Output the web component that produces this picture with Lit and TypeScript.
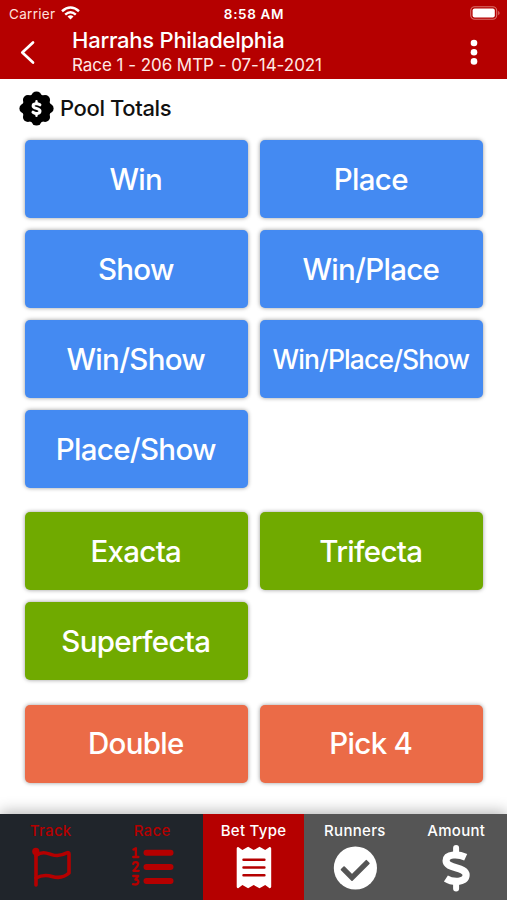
import { LitElement, html, css, svg } from "lit";
import { customElement } from "lit/decorators.js";
import { classMap } from "lit/directives/class-map.js";

type Bet = { label: string; cls?: string };
const groups: { color: string; bets: Bet[] }[] = [
  {
    color: "blue",
    bets: [
      { label: "Win" }, { label: "Place" }, { label: "Show" }, { label: "Win/Place" },
      { label: "Win/Show" }, { label: "Win/Place/Show", cls: "long" }, { label: "Place/Show" },
    ],
  },
  { color: "green", bets: [{ label: "Exacta" }, { label: "Trifecta" }, { label: "Superfecta" }] },
  { color: "orange", bets: [{ label: "Double" }, { label: "Pick 4" }] },
];

const flag = svg`<g fill="none" stroke="#b50000" stroke-width="3.6" stroke-linejoin="round" stroke-linecap="round">
  <path d="M7 5V38"/><path d="M7 8.5C13.5 4 17.5 6 22.5 7.6S33.5 8.4 38 5.8Q40 5 40 7V26C34 31.5 28.5 31 23 29.4S12.5 28 7 31"/></g>
  <circle cx="6.8" cy="4.4" r="3.6" fill="#b50000"/>`;
const list = svg`<g stroke="#b50000" stroke-width="6" stroke-linecap="round"><path d="M16.5 5.7H40.5M16.5 19.9H40.5M16.5 34H40.5"/></g>
  <g transform="translate(1.6 0)" fill="none" stroke="#b50000" stroke-width="2.3" stroke-linejoin="round" stroke-linecap="round">
  <path d="M1.8 2.5L4.3 1.2V10M1.6 10H6.8"/>
  <path d="M1.6 16.8C2.3 14.5 7 14.7 6.5 17.6Q6.2 19.3 1.8 23.8H7.2"/>
  <path d="M1.6 29H6.6L3.8 32.5C8.7 32.4 7.5 38.7 1.4 37.2"/></g>`;
const receipt = svg`<g transform="translate(1.2 0)"><path fill="#fff" d="M4.5 1.4Q4.5-.3 6-.1L10.2 3.1 15.9-.2 21.5 3.1 27.3-.2 33 3.1 37.4-.1Q39-.3 39 1.4V39.8Q38.8 41.4 37.4 41.2L33 38 27.3 41.3 21.5 38 15.9 41.3 10.2 38 6 41.2Q4.5 41.4 4.5 39.8Z"/>
  <path stroke="#b50000" stroke-width="2.5" stroke-linecap="round" d="M11.3 12.8H32.2M11.3 20.5H32.2M11.3 28.2H32.2"/></g>`;
const check = svg`<circle cx="22.4" cy="21" r="21.6" fill="#fff"/><path d="M11.1 20.2L8.6 22.7 19 33.1 35.8 16.3 33.3 13.8 19 28.1Z" fill="#555" stroke="#555" stroke-width="1.8" stroke-linejoin="round"/>`;
const dollar = svg`<g transform="translate(.1 -.2)" fill="none" stroke="#fff"><path d="M22 1.2V7M22 35.5V41.8" stroke-linecap="round" stroke-width="6"/>
  <path stroke-width="7.2" stroke-linejoin="round" d="M31.6 10.4C25 7.4 12 6.4 12 14C12 22.2 32 19.8 32 28.3C32 36.4 18 35.7 11.8 31.6"/></g>`;

const tabs = [
  { label: "Track", state: "done", icon: flag },
  { label: "Race", state: "done", icon: list },
  { label: "Bet Type", state: "active", icon: receipt },
  { label: "Runners", state: "next", icon: check },
  { label: "Amount", state: "next", icon: dollar },
];

@customElement("app-root")
export class AppRoot extends LitElement {
  static styles = css`
    :host { display: flex; flex-direction: column; height: 900px; width: 507px; overflow: hidden; background: #fff;
      font-family: Inter, "Liberation Sans", sans-serif; color: #fff; }
    * { box-sizing: border-box; }
    svg { display: block; overflow: visible; flex: none; }
    .top { background: #b50000; height: 79px; flex: none; }
    .status { display: grid; grid-template-columns: 1fr auto 1fr; height: 27px; align-items: center; padding: 0 7px 0 9px; font-size: 13.5px; }
    .carrier { display: flex; align-items: center; gap: 6px; letter-spacing: .3px; color: #ffe0dc; }
    .carrier svg { margin-top: -2px; }
    .time { font-weight: 600; letter-spacing: .65px; font-size: 13.5px; margin-right: 1px; }
    .battery { justify-self: end; margin: -1px -1px 0 0; }
    .bar { display: flex; height: 52px; }
    .back { margin: 14px 0 0 20px; }
    .titles { margin-left: 37px; flex: 1; white-space: nowrap; }
    .title { font-size: 22px; line-height: 26px; font-weight: 500; letter-spacing: -.25px; }
    .sub { font-size: 17px; line-height: 24px; color: #ffe9e6; letter-spacing: -.05px; }
    .more { margin: 12px 29px 0 0; }
    .content { flex: 1; padding: 11px 24px 0 25px; }
    .pool { display: flex; align-items: center; gap: 6px; height: 36px; margin: 0 0 14px -6px; color: #111; font-size: 22px; font-weight: 500; letter-spacing: -.38px; white-space: nowrap; }
    .group { display: grid; grid-template-columns: 223px 223px; grid-auto-rows: 78px; gap: 12px; margin-bottom: 24.4px; }
    .bet { display: flex; align-items: center; justify-content: center; border: 0; border-radius: 5px; padding: 0 1.4px 1px 0;
      font: 450 29.5px Inter, sans-serif; letter-spacing: -.7px; color: #fff; box-shadow: 0 0 4px rgba(0, 0, 0, .4); white-space: nowrap; }
    .long { font-size: 26.5px; letter-spacing: -.88px; }
    .blue { background: #448af2; }
    .green { background: #70aa00; }
    .orange { background: #eb6b47; }
    .tabs { display: grid; grid-template-columns: repeat(5, 1fr); height: 86px; flex: none; box-shadow: 0 -2px 14px rgba(0, 0, 0, .3); }
    .tab { display: flex; flex-direction: column; align-items: center; padding-top: 7px; gap: 10px; font-size: 15px; line-height: 20px; font-weight: 500; letter-spacing: .3px; }
    .tab svg { margin-top: -4px; }
    .done { background: #20252b; color: #b50000; }
    .active { background: #b50000; }
    .next { background: #555; }
  `;

  render() {
    return html`
      <header class="top">
        <div class="status">
          <div class="carrier"><span>Carrier</span>
            <svg width="19" height="14" viewBox="0 0 19 14"><g fill="none" stroke="#fff" stroke-width="2.5"><path d="M1 5.2Q9.5-2.3 18 5.2M4.2 8.6Q9.5 4 14.8 8.6"/></g><path d="M6.5 10.5Q9.5 8.2 12.5 10.5L9.5 13.5Z" fill="#fff"/></svg>
          </div>
          <div class="time">8:58 AM</div>
          <svg class="battery" width="31" height="14" viewBox="0 0 31 14"><rect x=".7" y=".7" width="26" height="12.6" rx="4" fill="none" stroke="#d9706b" stroke-width="1.1"/><rect x="2.6" y="2.6" width="22.2" height="8.8" rx="2" fill="#fff"/><path d="M28.2 4.7Q31 7 28.2 9.3Z" fill="#d9706b"/></svg>
        </div>
        <div class="bar">
          <svg class="back" width="15" height="23" viewBox="0 0 15 23"><path d="M13 1.5L2.3 11.5 13 21.5" fill="none" stroke="#fff" stroke-width="2.7" stroke-linecap="round" stroke-linejoin="round"/></svg>
          <div class="titles"><div class="title">Harrahs Philadelphia</div><div class="sub">Race 1 - 206 MTP - 07-14-2021</div></div>
          <svg class="more" width="8" height="26" viewBox="0 0 8 26" fill="#fff"><circle cx="4" cy="4" r="3.3"/><circle cx="4" cy="13.2" r="3.3"/><circle cx="4" cy="22.4" r="3.3"/></svg>
        </div>
      </header>
      <main class="content">
        <div class="pool">
          <svg width="35" height="35" viewBox="0 0 35 35">
            <circle cx="17.5" cy="17.5" r="14.5"/>
            ${[0, 45, 90, 135, 180, 225, 270, 315].map((a) => svg`<circle cx="17.5" cy="5.4" r="5" transform="rotate(${a} 17.5 17.5)"/>`)}
            <g fill="none" stroke="#fff" stroke-linecap="round"><path stroke-width="2.4" d="M17.5 10.3V12M17.5 23V24.8"/><path stroke-width="3" d="M20.9 13.8C18.5 12.2 14.1 12.4 14.1 14.9C14.1 18 21 16.8 21 20.1C21 23 16.5 23 14 21.2"/></g>
          </svg><span>Pool Totals</span>
        </div>
        ${groups.map((g) => html`<section class="group">
          ${g.bets.map((b) => html`<button class=${classMap({ bet: true, [g.color]: true, long: b.cls === "long" })}>${b.label}</button>`)}
        </section>`)}
      </main>
      <nav class="tabs">
        ${tabs.map((t) => html`<div class=${classMap({ tab: true, [t.state]: true })}><span>${t.label}</span><svg width="44" height="42" viewBox="0 0 44 42">${t.icon}</svg></div>`)}
      </nav>`;
  }
}
